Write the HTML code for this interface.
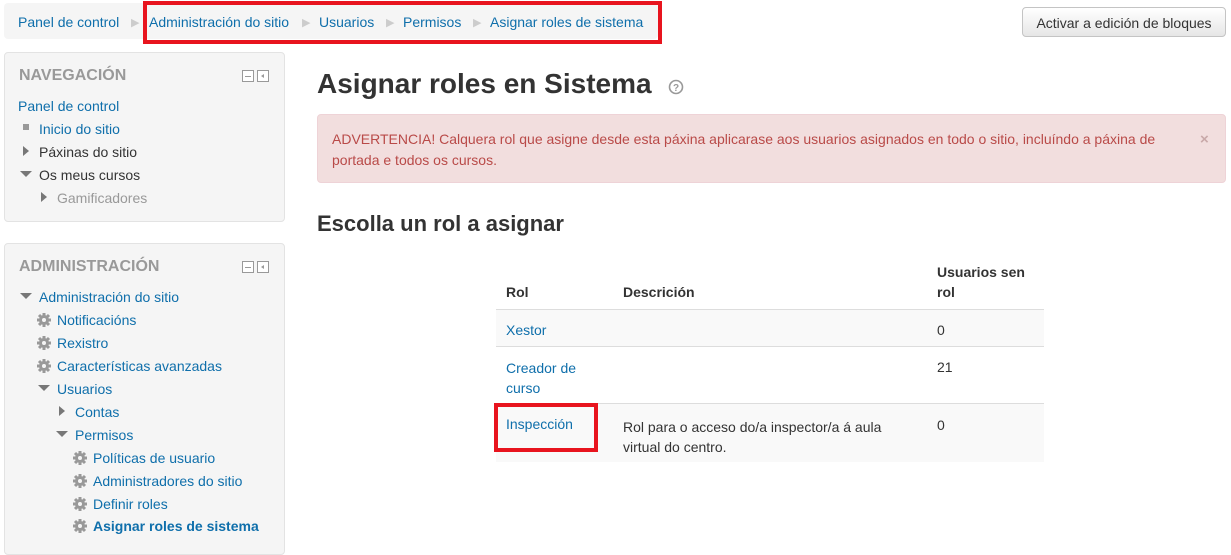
<!DOCTYPE html>
<html><head><meta charset="utf-8"><style>
body{margin:0;width:1231px;height:540px;overflow:hidden;background:#fff;font-family:"Liberation Sans",sans-serif;font-size:14px;color:#333;position:relative}
.a{position:absolute;white-space:nowrap}
a,.l{color:#0f6fab;text-decoration:none}
.bc{position:absolute;left:4px;top:3px;width:654px;height:36px;background:#f5f5f5;border-radius:4px}
.sep{color:#ccc;font-size:11px}
.red{position:absolute;border:4px solid #e8141e}
.blk{position:absolute;left:4px;width:279px;background:#f5f5f5;border:1px solid #e3e3e3;border-radius:4px}
.bt{font-weight:bold;font-size:16px;color:#999}
.ic{position:absolute;width:12px;height:12px;border:1px solid #999;box-sizing:border-box;background:#fff}
.tri-r{position:absolute;width:0;height:0;border-top:5px solid transparent;border-bottom:5px solid transparent;border-left:6px solid #777}
.tri-d{position:absolute;width:0;height:0;border-left:6px solid transparent;border-right:6px solid transparent;border-top:6px solid #777}
.g{position:absolute;width:16px;height:16px}
.btn{position:absolute;left:1022px;top:7px;width:204px;height:30px;border:1px solid #c4c4c4;border-radius:4px;background:linear-gradient(#fff,#e6e6e6);box-sizing:border-box;text-align:center;line-height:31px;color:#333}
</style></head><body>
<div class="bc"></div>
<div class="a" style="left:18px;top:14px"><a>Panel de control</a></div>
<div class="a sep" style="left:131px;top:16px">▶</div>
<div class="a" style="left:149px;top:14px"><a>Administración do sitio</a></div>
<div class="a sep" style="left:302px;top:16px">▶</div>
<div class="a" style="left:319px;top:14px"><a>Usuarios</a></div>
<div class="a sep" style="left:386px;top:16px">▶</div>
<div class="a" style="left:403px;top:14px"><a>Permisos</a></div>
<div class="a sep" style="left:473px;top:16px">▶</div>
<div class="a" style="left:490px;top:14px"><a>Asignar roles de sistema</a></div>
<div class="red" style="left:143px;top:1px;width:511px;height:35px"></div>
<div class="btn">Activar a edición de bloques</div>

<div class="blk" style="top:52px;height:168px"></div>
<div class="a bt" style="left:19px;top:67px">NAVEGACIÓN</div>
<div class="ic" style="left:242px;top:70px"><div style="position:absolute;left:2px;top:5px;width:6px;height:1px;background:#999"></div></div>
<div class="ic" style="left:257px;top:70px"><div style="position:absolute;left:3px;top:3px;border-top:2px solid transparent;border-bottom:2px solid transparent;border-right:3px solid #999"></div></div>
<div class="a" style="left:18px;top:98px"><a>Panel de control</a></div>
<div class="a" style="left:23px;top:124px;width:6px;height:6px;background:#999"></div>
<div class="a" style="left:39px;top:121px"><a>Inicio do sitio</a></div>
<div class="tri-r" style="left:23px;top:146px"></div>
<div class="a" style="left:39px;top:144px">Páxinas do sitio</div>
<div class="tri-d" style="left:20px;top:171px"></div>
<div class="a" style="left:39px;top:167px">Os meus cursos</div>
<div class="tri-r" style="left:41px;top:192px"></div>
<div class="a" style="left:57px;top:190px;color:#999">Gamificadores</div>

<div class="blk" style="top:243px;height:310px"></div>
<div class="a bt" style="left:19px;top:258px">ADMINISTRACIÓN</div>
<div class="ic" style="left:242px;top:261px"><div style="position:absolute;left:2px;top:5px;width:6px;height:1px;background:#999"></div></div>
<div class="ic" style="left:257px;top:261px"><div style="position:absolute;left:3px;top:3px;border-top:2px solid transparent;border-bottom:2px solid transparent;border-right:3px solid #999"></div></div>
<div class="tri-d" style="left:20px;top:293px"></div>
<div class="a" style="left:39px;top:289px"><a>Administración do sitio</a></div>
<svg width="0" height="0" style="position:absolute"><defs><g id="gear"><circle cx="8" cy="8" r="5" fill="#999"/><g stroke="#999" stroke-width="3"><line x1="8" y1="1" x2="8" y2="15"/><line x1="1" y1="8" x2="15" y2="8"/><line x1="3" y1="3" x2="13" y2="13"/><line x1="13" y1="3" x2="3" y2="13"/></g><circle cx="8" cy="8" r="2" fill="#f5f5f5"/></g></defs></svg>
<svg class="g" style="left:36px;top:312px"><use href="#gear"/></svg>
<div class="a" style="left:57px;top:312px"><a>Notificacións</a></div>
<svg class="g" style="left:36px;top:335px"><use href="#gear"/></svg>
<div class="a" style="left:57px;top:335px"><a>Rexistro</a></div>
<svg class="g" style="left:36px;top:358px"><use href="#gear"/></svg>
<div class="a" style="left:57px;top:358px"><a>Características avanzadas</a></div>
<div class="tri-d" style="left:38px;top:385px"></div>
<div class="a" style="left:57px;top:381px"><a>Usuarios</a></div>
<div class="tri-r" style="left:59px;top:406px"></div>
<div class="a" style="left:75px;top:404px"><a>Contas</a></div>
<div class="tri-d" style="left:56px;top:431px"></div>
<div class="a" style="left:75px;top:427px"><a>Permisos</a></div>
<svg class="g" style="left:72px;top:450px"><use href="#gear"/></svg>
<div class="a" style="left:93px;top:450px"><a>Políticas de usuario</a></div>
<svg class="g" style="left:72px;top:473px"><use href="#gear"/></svg>
<div class="a" style="left:93px;top:473px"><a>Administradores do sitio</a></div>
<svg class="g" style="left:72px;top:496px"><use href="#gear"/></svg>
<div class="a" style="left:93px;top:496px"><a>Definir roles</a></div>
<svg class="g" style="left:72px;top:518px"><use href="#gear"/></svg>
<div class="a" style="left:93px;top:518px;font-weight:bold"><a>Asignar roles de sistema</a></div>

<div class="a" style="left:317px;top:68px;font-size:28px;font-weight:bold;color:#333">Asignar roles en Sistema</div>
<svg class="a" style="left:668px;top:79px" width="16" height="16"><circle cx="8" cy="8" r="6.5" fill="none" stroke="#999" stroke-width="1.6"/><text x="8" y="12" font-size="10" font-weight="bold" text-anchor="middle" fill="#999" font-family="Liberation Sans">?</text></svg>
<div class="a" style="left:317px;top:114px;width:907px;height:67px;background:#f2dede;border:1px solid #eed3d7;border-radius:4px"></div>
<div class="a" style="left:332px;top:129px;color:#b94a48;line-height:21px;white-space:normal;width:860px">ADVERTENCIA! Calquera rol que asigne desde esta páxina aplicarase aos usuarios asignados en todo o sitio, incluíndo a páxina de portada e todos os cursos.</div>
<div class="a" style="left:1200px;top:131px;color:#c9a9a9;font-weight:bold;font-size:15px">×</div>
<div class="a" style="left:317px;top:211px;font-size:22px;font-weight:bold">Escolla un rol a asignar</div>

<div class="a" style="left:496px;top:309px;width:548px;height:1px;background:#ddd"></div>
<div class="a" style="left:496px;top:310px;width:548px;height:37px;background:#f9f9f9"></div>
<div class="a" style="left:496px;top:346px;width:548px;height:1px;background:#ddd"></div>
<div class="a" style="left:496px;top:403px;width:548px;height:1px;background:#ddd"></div>
<div class="a" style="left:496px;top:404px;width:548px;height:58px;background:#f9f9f9"></div>
<div class="a" style="left:506px;top:284px;font-weight:bold">Rol</div>
<div class="a" style="left:623px;top:284px;font-weight:bold">Descrición</div>
<div class="a" style="left:937px;top:262px;font-weight:bold;line-height:20px">Usuarios sen<br>rol</div>
<div class="a" style="left:506px;top:322px"><a>Xestor</a></div>
<div class="a" style="left:937px;top:322px">0</div>
<div class="a" style="left:506px;top:358px;line-height:20px"><a>Creador de<br>curso</a></div>
<div class="a" style="left:937px;top:359px">21</div>
<div class="a" style="left:506px;top:416px"><a>Inspección</a></div>
<div class="a" style="left:623px;top:417px;line-height:20px">Rol para o acceso do/a inspector/a á aula<br>virtual do centro.</div>
<div class="a" style="left:937px;top:417px">0</div>
<div class="red" style="left:494px;top:403px;width:96px;height:41px"></div>
</body></html>
